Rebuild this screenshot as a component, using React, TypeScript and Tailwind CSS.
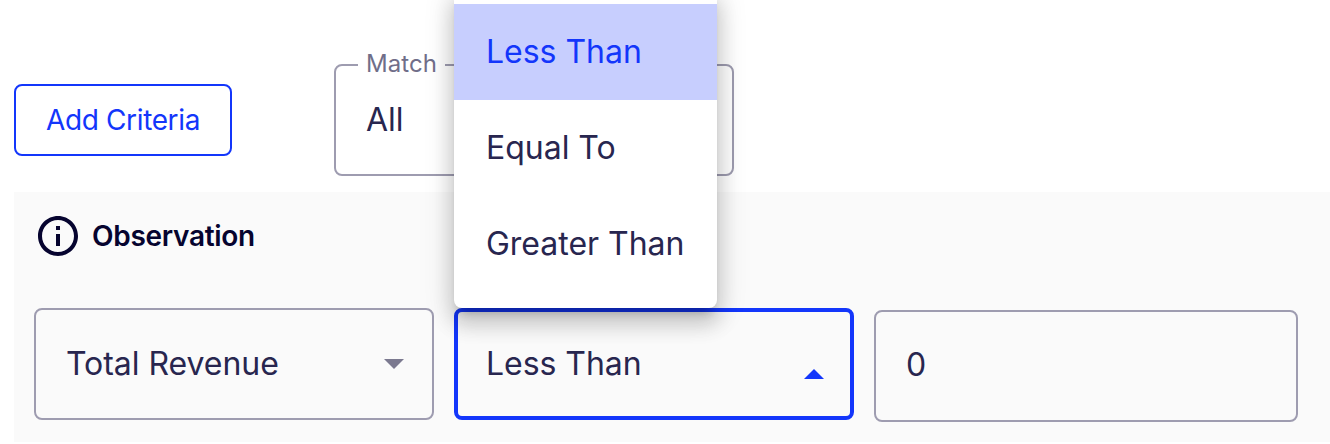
import type { ReactNode } from "react";
import clsx from "clsx";

const OPTIONS = ["Less Than", "Equal To", "Greater Than"];

type FieldProps = {
  label?: string;
  focused?: boolean;
  className?: string;
  children: ReactNode;
};

function Field({ label, focused, className, children }: FieldProps) {
  return (
    <div
      className={clsx(
        "relative flex h-28 shrink-0 items-center justify-between rounded-lg text-[32px] leading-[46px] tracking-[-0.04px] text-[#28264f]",
        focused
          ? "border-4 border-[#1336fb] pl-7 pr-[26px]"
          : "border-2 border-[#9e9cb0] pl-[30px] pr-7",
        className
      )}
    >
      {label && (
        <span className="absolute -top-4 left-[22px] bg-white px-2 text-2xl leading-7 tracking-[0.05px] text-[#706e89]">
          {label}
        </span>
      )}
      {children}
    </div>
  );
}

function Caret({ open }: { open?: boolean }) {
  return (
    <svg
      viewBox="0 0 20 10"
      className={clsx(
        "h-[10px] w-5",
        open ? "mt-5 text-[#1336fb]" : "text-[#7b798f]"
      )}
    >
      <path d={open ? "M0 10L10 0l10 10z" : "M0 0l10 10L20 0z"} fill="currentColor" />
    </svg>
  );
}

function OptionsMenu({ selected }: { selected: string }) {
  return (
    <ul className="absolute left-[454px] -top-3 w-[263px] rounded-lg bg-white py-4 shadow-[0_10px_10px_-6px_rgba(0,0,0,0.2),0_16px_20px_2px_rgba(0,0,0,0.14),0_6px_28px_4px_rgba(0,0,0,0.12)]">
      {OPTIONS.map((option) => (
        <li
          key={option}
          className={clsx(
            "flex h-24 items-center whitespace-nowrap px-8 text-[32px] leading-[48px] tracking-[-0.02px]",
            option === selected ? "bg-[#c7cefe] text-[#1336fb]" : "text-[#28264f]"
          )}
        >
          {option}
        </li>
      ))}
    </ul>
  );
}

export default function App() {
  return (
    <main className="relative h-[444px] w-full overflow-hidden bg-white font-['Inter',sans-serif]">
      {/* toolbar */}
      <div className="flex h-48 items-start gap-[102px] pl-[14px] pt-16">
        <button className="mt-5 h-[72px] w-[218px] rounded-lg border-2 border-[#1336fb] text-[28px] tracking-[-0.36px] text-[#1336fb]">
          Add Criteria
        </button>
        <Field label="Match" className="w-[400px]">
          All
        </Field>
      </div>

      {/* criteria */}
      <section className="ml-[14px] h-[250px] bg-[#fafafa] pl-5 pt-5">
        <div className="flex h-12 items-center gap-[10px]">
          <svg viewBox="0 0 24 24" className="size-12 text-[#06042f]" fill="currentColor">
            <path d="M11 7h2v2h-2zm0 4h2v6h-2zm1-9C6.48 2 2 6.48 2 12s4.48 10 10 10 10-4.48 10-10S17.52 2 12 2zm0 18c-4.41 0-8-3.59-8-8s3.59-8 8-8 8 3.59 8 8-3.59 8-8 8z" />
          </svg>
          <h2 className="text-[28px] font-semibold tracking-[-0.3px] text-[#06042f]">Observation</h2>
        </div>

        <div className="mt-12 flex gap-5">
          <Field className="w-[400px]">
            Total Revenue
            <Caret />
          </Field>
          <Field focused className="w-[400px]">
            Less Than
            <Caret open />
          </Field>
          <Field className="mt-[2px] w-[424px] pb-[2px]">0</Field>
        </div>
      </section>

      <OptionsMenu selected="Less Than" />
    </main>
  );
}
